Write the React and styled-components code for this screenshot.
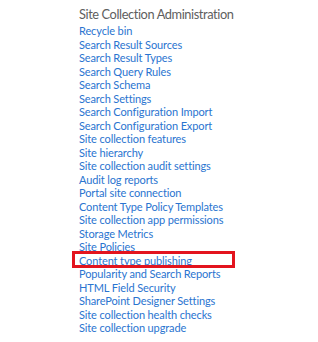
import React from "react";
import styled, { createGlobalStyle } from "styled-components";

const Global = createGlobalStyle`
  html, body { margin: 0; padding: 0; background: #fff; }
  body { width: 318px; height: 342px; overflow: hidden; }
`;

const Panel = styled.div`
  padding: 5px 0 0 79px;
  font-family: Lato, "Open Sans", sans-serif;
`;

const Heading = styled.div`
  color: #5e5e5e;
  font-size: 12.8px;
  letter-spacing: -0.4px;
  line-height: 18px;
  margin-bottom: 1px;
  white-space: nowrap;
`;

const List = styled.ul`
  list-style: none;
  margin: 0;
  padding: 0;
`;

const Item = styled.li`
  position: relative;
  font-size: 11px;
  letter-spacing: -0.12px;
  line-height: 13.5px;
  white-space: nowrap;
  color: #2a74d0;
`;

const Highlight = styled.span`
  position: absolute;
  left: -7px;
  top: -2.5px;
  width: 163px;
  height: 17px;
  box-sizing: border-box;
  border: 3px solid #e3141e;
`;

const items = [
  "Recycle bin",
  "Search Result Sources",
  "Search Result Types",
  "Search Query Rules",
  "Search Schema",
  "Search Settings",
  "Search Configuration Import",
  "Search Configuration Export",
  "Site collection features",
  "Site hierarchy",
  "Site collection audit settings",
  "Audit log reports",
  "Portal site connection",
  "Content Type Policy Templates",
  "Site collection app permissions",
  "Storage Metrics",
  "Site Policies",
  "Content type publishing",
  "Popularity and Search Reports",
  "HTML Field Security",
  "SharePoint Designer Settings",
  "Site collection health checks",
  "Site collection upgrade",
];

export default function App() {
  return (
    <>
      <Global />
      <Panel>
        <Heading>Site Collection Administration</Heading>
        <List>
          {items.map((t) => (
            <Item key={t}>
              {t}
              {t === "Content type publishing" && <Highlight />}
            </Item>
          ))}
        </List>
      </Panel>
    </>
  );
}
